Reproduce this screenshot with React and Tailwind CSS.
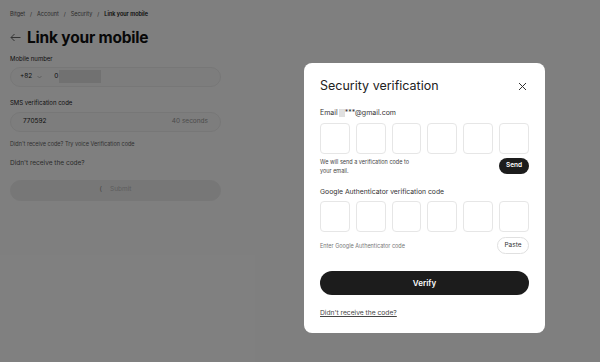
import React from "react";

function Boxes() {
  return (
    <div className="flex gap-[6px] mt-[6px]">
      {[0, 1, 2, 3, 4, 5].map((i) => (
        <div key={i} className="w-[30px] h-[31px] rounded-[4px] border border-[#e6e6e6] bg-white" />
      ))}
    </div>
  );
}

export default function App() {
  return (
    <div className="relative w-[600px] h-[362px] overflow-hidden bg-white" style={{ fontFamily: "Inter, 'Noto Sans', sans-serif" }}>
      {/* Page */}
      <div className="px-[10px] pt-[10px] w-[232px]">
        <div className="flex items-center gap-[5px] text-[5.5px] text-[#555] leading-[8px]">
          <span>Bitget</span><span>/</span><span>Account</span><span>/</span><span>Security</span><span>/</span>
          <span className="text-[#111] font-semibold">Link your mobile</span>
        </div>
        <div className="flex items-center gap-[6px] mt-[12px]">
          <svg width="11" height="9" viewBox="0 0 11 9" fill="none" stroke="#666" strokeWidth="1">
            <path d="M10.5 4.5H1M4.5 1L1 4.5L4.5 8" />
          </svg>
          <span className="text-[15.5px] font-bold text-[#111] leading-none tracking-[-0.2px]">Link your mobile</span>
        </div>
        <div className="text-[6px] text-[#222] mt-[9px] leading-[8px]">Mobile number</div>
        <div className="mt-[4px] h-[20px] w-[211px] rounded-full border border-[#eee] bg-[#fafafa] flex items-center pl-[9px] text-[6.5px] text-[#222]">
          <span>+82</span>
          <svg className="ml-[5px]" width="5" height="4" viewBox="0 0 5 4" fill="none" stroke="#999" strokeWidth="0.6"><path d="M0.5 1L2.5 3L4.5 1" /></svg>
          <span className="ml-[12px]">0</span>
          <span className="ml-[1px] w-[42px] h-[13px] bg-[#e2e2e2]" />
        </div>
        <div className="text-[6px] text-[#222] mt-[12px] leading-[8px]">SMS verification code</div>
        <div className="mt-[5px] h-[20px] w-[211px] rounded-full border border-[#eee] bg-[#fafafa] flex items-center justify-between px-[12px] text-[6.5px]">
          <span className="text-[#222]">770592</span>
          <span className="text-[#999]">40 seconds</span>
        </div>
        <div className="text-[5.5px] text-[#666] mt-[8px] leading-[8px]">Didn't receive code? Try voice Verification code</div>
        <div className="text-[6.5px] text-[#555] mt-[11px] leading-[9px]">Didn't receive the code?</div>
        <div className="mt-[12px] h-[21px] w-[211px] rounded-full border border-[#eee] bg-[#efefef] flex items-center justify-center gap-[8px] text-[6.5px] text-[#bbb]">
          <span className="text-[#888]">(</span><span>Submit</span>
        </div>
      </div>

      {/* Overlay */}
      <div className="absolute inset-0 bg-black/50" />

      {/* Modal */}
      <div className="absolute left-[304px] top-[63px] w-[241px] h-[270px] bg-white rounded-[8px] px-[16px] pt-[17px]">
        <div className="flex items-center justify-between">
          <span className="text-[12.5px] text-[#222] leading-none">Security verification</span>
          <svg width="9" height="9" viewBox="0 0 9 9" stroke="#333" strokeWidth="1" fill="none" className="mr-[2px]"><path d="M1 1L8 8M8 1L1 8" /></svg>
        </div>
        <div className="mt-[16px] flex items-center text-[7px] text-[#333] leading-none">
          <span>Email</span>
          <span className="ml-[1px] w-[6px] h-[8px] bg-[#e0e0e0]" />
          <span>***@gmail.com</span>
        </div>
        <Boxes />
        <div className="flex items-start justify-between mt-[3px]">
          <div className="text-[5.5px] text-[#444] leading-[9px] mt-[1px]">We will send a verification code to<br />your email.</div>
          <div className="h-[16px] w-[30px] rounded-full bg-[#1c1c1c] text-white text-[6.5px] font-semibold flex items-center justify-center mt-[1px]">Send</div>
        </div>
        <div className="mt-[13px] text-[6.8px] text-[#333] leading-none">Google Authenticator verification code</div>
        <Boxes />
        <div className="flex items-center justify-between mt-[5px]">
          <div className="text-[5.5px] text-[#777]">Enter Google Authenticator code</div>
          <div className="h-[17px] w-[32px] rounded-full border border-[#e0e0e0] text-[#333] text-[6.5px] flex items-center justify-center">Paste</div>
        </div>
        <div className="mt-[17px] h-[24px] rounded-full bg-[#1c1c1c] text-white text-[8px] font-semibold flex items-center justify-center">Verify</div>
        <div className="mt-[15px] text-[6.7px] text-[#444] underline leading-none">Didn't receive the code?</div>
      </div>
    </div>
  );
}
